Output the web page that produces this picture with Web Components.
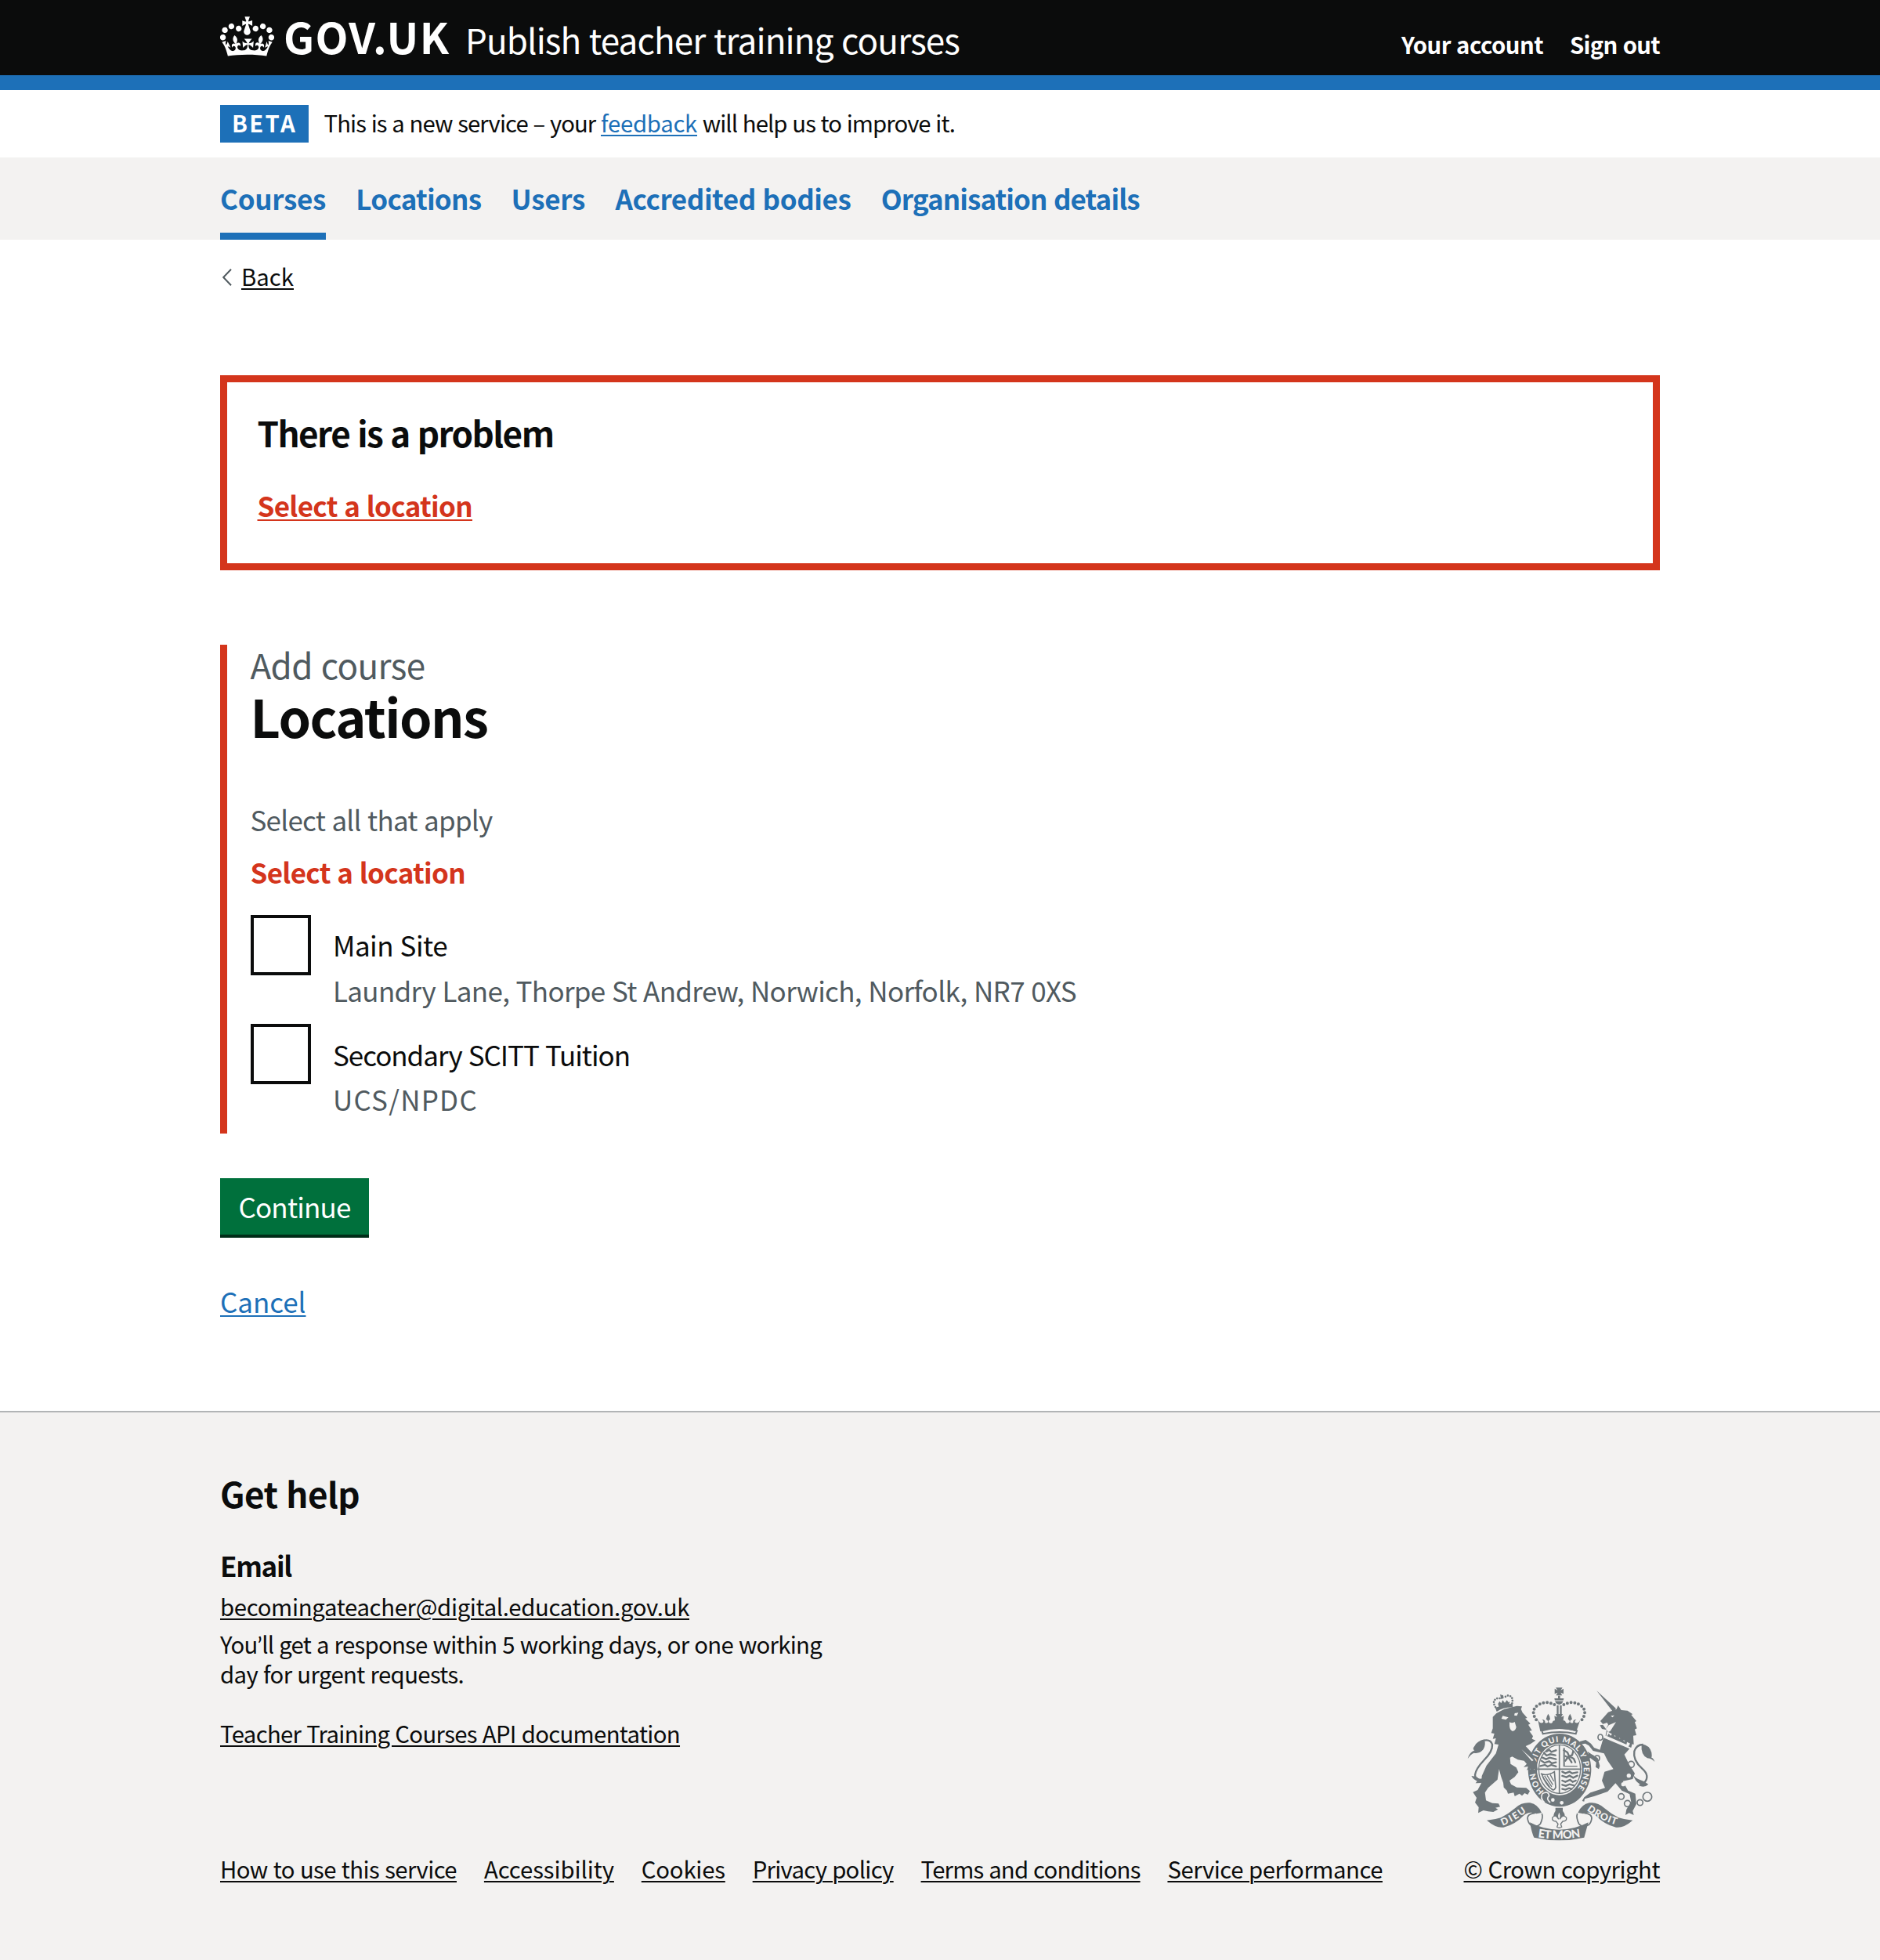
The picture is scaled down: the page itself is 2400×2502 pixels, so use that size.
<!DOCTYPE html>
<html lang="en">
<head>
<meta charset="utf-8">
<title>Locations – Publish teacher training courses</title>
<style>
html, body { margin: 0; }
body {
  font-family: "Noto Sans CJK SC", "Noto Sans", sans-serif;
  color: #0b0c0c;
  background: #fff;
  --blue: #1d70b8; --red: #d4351c; --grey: #505a5f; --pale: #f3f2f1;
}
service-page { min-height: 2502px; }
</style>
</head>
<body>
<service-page>
  <site-header slot="header"></site-header>
  <phase-banner slot="header"></phase-banner>
  <primary-nav slot="header"></primary-nav>
  <back-link></back-link>
  <error-summary>
    <fit-text slot="title" s="44" l="48" w="378" b>There is a problem</fit-text>
    <fit-text s="35" l="40" w="274.5" b u>Select a location</fit-text>
  </error-summary>
  <error-group>
    <fit-text slot="caption" s="44" l="48" w="223">Add course</fit-text>
    <fit-text slot="heading" s="66.5" l="70" w="303" b>Locations</fit-text>
    <fit-text slot="hint" s="35" l="40" w="309">Select all that apply</fit-text>
    <fit-text slot="error" s="35" l="40" w="274.5" b>Select a location</fit-text>
    <check-item>
      <fit-text s="35" l="40" w="146">Main Site</fit-text>
      <fit-text slot="hint" s="35" l="40" w="949">Laundry Lane, Thorpe St Andrew, Norwich, Norfolk, NR7 0XS</fit-text>
    </check-item>
    <check-item>
      <fit-text s="35" l="40" w="379">Secondary SCITT Tuition</fit-text>
      <fit-text slot="hint" s="35" l="40" w="185">UCS/NPDC</fit-text>
    </check-item>
  </error-group>
  <submit-button><fit-text s="35" l="40" w="143">Continue</fit-text></submit-button>
  <cancel-link></cancel-link>
  <site-footer slot="footer"></site-footer>
</service-page>

<script>
const define = (name, html) => {
  const t = document.createElement('template');
  t.innerHTML = html;
  customElements.define(name, class extends HTMLElement {
    connectedCallback() {
      if (this.shadowRoot) return;
      this.attachShadow({ mode: 'open' }).append(t.content.cloneNode(true));
    }
  });
};

/* One line of text tracked to an exact measure.
   s: font size, l: line height, w: measure, b: bold, u: underlined */
customElements.define('fit-text', class extends HTMLElement {
  connectedCallback() {
    if (this.shadowRoot) return;
    const a = n => this.getAttribute(n), s = +a('s'), w = +a('w');
    const drop = s > 30 && s < 60 ? 3 : 0;
    this.attachShadow({ mode: 'open' }).innerHTML = `<style>
      :host { display: block; flex: none; width: ${w}px; height: ${a('l')}px; line-height: ${+a('l') + drop}px;
        font-size: ${s}px; font-weight: ${this.hasAttribute('b') ? 700 : 400}; white-space: pre; word-spacing: .035em; }
      span { display: inline-block; height: 100%; }
      i { font-style: normal; ${this.hasAttribute('u') ? 'text-decoration: underline 2px; text-underline-offset: 3px;' : ''} }
    </style><span><i><slot></slot></i></span>`;
    const span = this.shadowRoot.querySelector('span');
    const natural = span.getBoundingClientRect().width;
    if (natural) this.style.letterSpacing = ((w - natural) / this.textContent.length).toFixed(3) + 'px';
  }
});

define('service-page', `<style>
  :host { display: flex; flex-direction: column; }
  main { width: 1838px; margin: 0 auto; height: 1495px; display: flex; flex-direction: column; align-items: flex-start; }
</style><slot name="header"></slot><main><slot></slot></main><slot name="footer"></slot>`);

define('crown-logo', `<style>:host { display: block; } svg { display: block; }</style>
<svg width="69" height="51" viewBox="0 4 35.6 26.2" fill="#fff"><path fill-rule="evenodd" d="M6.7 12.2c1 .4 2.1-.1 2.5-1s-.1-2.1-1-2.5c-1-.4-2.1.1-2.5 1-.4 1 0 2.1 1 2.5m-4.3 2.5c1 .4 2.1-.1 2.5-1s-.1-2.1-1-2.5c-1-.4-2.1.1-2.5 1-.5 1 0 2.1 1 2.5m-1.3 4.8c1 .4 2.1-.1 2.5-1 .4-1-.1-2.1-1-2.5-1-.4-2.1.1-2.5 1-.4 1 0 2.1 1 2.5m10.4-5.8c1 .4 2.1-.1 2.5-1s-.1-2.1-1-2.5c-1-.4-2.1.1-2.5 1s0 2.1 1 2.5m17.4-1.5c-1 .4-2.1-.1-2.5-1s.1-2.1 1-2.5c1-.4 2.1.1 2.5 1 .5 1 0 2.1-1 2.5m4.3 2.5c-1 .4-2.1-.1-2.5-1s.1-2.1 1-2.5c1-.4 2.1.1 2.5 1 .5 1 0 2.1-1 2.5m1.3 4.8c-1 .4-2.1-.1-2.5-1-.4-1 .1-2.1 1-2.5 1-.4 2.1.1 2.5 1 .4 1 0 2.1-1 2.5m-10.4-5.8c-1 .4-2.1-.1-2.5-1s.1-2.1 1-2.5c1-.4 2.1.1 2.5 1s0 2.1-1 2.5m-5.3-4.9 2.4 1.3V6.5l-2.4.8c-.1-.1-.1-.2-.2-.2s1-3 1-3h-3.4l1 3c-.1.1-.2.1-.2.2-.1.1-2.4-.7-2.4-.7v3.5L17 8.8c-.1.1 0 .2.1.3l-1.4 4.2c-.1.2-.1.4-.1.7 0 1.1.8 2.1 1.9 2.2h.6C19.2 16 20 15.1 20 14c0-.2 0-.4-.1-.7l-1.4-4.2c.2-.1.3-.2.3-.3m-1 20.3c4.6 0 8.9.3 12.8.9 1.1-4.6 2.4-7.2 3.8-9.1l-2.6-.9c.3 1.3.3 1.9 0 2.8-.4-.4-.8-1.2-1.1-2.4l-1.2 4.2c.8-.5 1.4-.9 2-.9-1.2 2.6-2.7 3.2-3.6 3-1.2-.2-1.7-1.3-1.5-2.2.3-1.3 1.6-1.6 2.2-.1 1.2-2.4-.8-3.1-2.1-2.4 1.9-1.9 2.2-3.6.6-5.7-2.2 1.7-2.2 3.3-1.2 5.6-1.3-1.5-3.3-.7-2.5 1.7.9-1.4 2.1-.5 2 .8-.2 1.2-1.7 2.1-3.7 1.9-2.8-.2-2.9-2.2-3-3.7.7-.1 1.9.5 3 2l.4-4.4c-1.1 1.1-2.1 1.4-3.2 1.4.4-1.2 2.1-3 2.1-3h-5.2s1.8 1.8 2.1 3c-1.1 0-2.1-.2-3.2-1.4l.4 4.4c1.1-1.5 2.3-2.1 3-2-.1 1.6-.2 3.5-3 3.7-1.9.2-3.5-.7-3.7-1.9-.2-1.3 1-2.2 1.9-.8.7-2.4-1.3-3.1-2.6-1.7 1-2.3.9-4-1.2-5.6-1.6 2.1-1.3 3.8.6 5.7-1.3-.7-3.2 0-2.1 2.4.6-1.5 1.9-1.1 2.2.1.2.9-.4 1.9-1.5 2.2-1 .2-2.4-.5-3.7-3 .7 0 1.3.4 2 .9L5 20.4c-.3 1.2-.7 1.9-1.2 2.4-.3-.8-.2-1.5 0-2.8l-2.6.9C2.7 22.8 4 25.4 5.1 30c3.8-.5 8.2-.9 12.7-.9"/></svg>`);

define('site-header', `<style>
  :host { display: block; height: 96px; background: #0b0c0c; border-bottom: 19px solid var(--blue); color: #fff; }
  .row { width: 1838px; margin: 0 auto; padding-top: 14px; display: flex; align-items: flex-start; }
  crown-logo { margin-top: 6.5px; }
  .word { margin-left: 12px; }
  .title { margin: 11px 0 0 19.5px; }
  nav { margin: 23px 0 0 auto; display: flex; gap: 34px; }
</style>
<div class="row"><crown-logo></crown-logo>
  <fit-text class="word" s="54.5" l="60" w="212.5" b>GOV.UK</fit-text>
  <fit-text class="title" s="44" l="48" w="631">Publish teacher training courses</fit-text>
  <nav><fit-text s="29.3" l="38" w="181" b>Your account</fit-text><fit-text s="29.3" l="38" w="115" b>Sign out</fit-text></nav>
</div>`);

define('phase-banner', `<style>
  :host { display: flex; width: 1838px; height: 67px; margin: 0 auto; padding-top: 19px; align-items: flex-start; }
  .tag { background: var(--blue); color: #fff; height: 48px; width: 98px; padding-left: 15px; margin-right: 19.5px; }
  .copy { display: flex; margin-top: 2.6px; } .link { color: var(--blue); }
</style>
<div class="tag"><fit-text s="29.3" l="44" w="83" b>BETA</fit-text></div>
<div class="copy"><fit-text s="29.3" l="38" w="353.5">This is a new service – your </fit-text><fit-text class="link" s="29.3" l="38" w="123" u>feedback</fit-text><fit-text s="29.3" l="38" w="329"> will help us to improve it.</fit-text></div>`);

define('primary-nav', `<style>
  :host { display: block; background: var(--pale); height: 105px; color: var(--blue); }
  nav { width: 1838px; height: 105px; margin: 0 auto; display: flex; gap: 38.3px; }
  div { box-sizing: border-box; height: 105px; padding-top: 30px; }
  .on { border-bottom: 9.5px solid var(--blue); }
</style><nav>
  <div class="on"><fit-text s="35" l="40" w="135" b>Courses</fit-text></div>
  <div><fit-text s="35" l="40" w="160" b>Locations</fit-text></div>
  <div><fit-text s="35" l="40" w="94.5" b>Users</fit-text></div>
  <div><fit-text s="35" l="40" w="301" b>Accredited bodies</fit-text></div>
  <div><fit-text s="35" l="40" w="330" b>Organisation details</fit-text></div>
</nav>`);

define('back-link', `<style>
  :host { display: flex; margin-top: 27px; height: 38px; }
  svg { width: 27px; height: 38px; }
</style><svg viewBox="0 0 27 38" fill="none" stroke="#505a5f" stroke-width="2"><path d="M14 10.8 4.2 21 14 31.2"/></svg>
<fit-text s="29.3" l="38" w="67" u>Back</fit-text>`);

define('error-summary', `<style>
  :host { display: block; box-sizing: border-box; width: 1838px; height: 249px; margin-top: 107.6px; border: 9.5px solid var(--red); padding: 39.5px 38.5px 0; }
  .link { margin-top: 47.5px; color: var(--red); }
</style><slot name="title"></slot><div class="link"><slot></slot></div>`);

define('error-group', `<style>
  :host { display: block; height: 623.6px; margin-top: 95.4px; border-left: 9.5px solid var(--red); padding-left: 29.5px; }
  .cap, .hint { color: var(--grey); } .head { margin: 7.4px 0 76px; }
  .err { color: var(--red); margin: 27px 0 36.4px; }
</style><div class="cap"><slot name="caption"></slot></div><div class="head"><slot name="heading"></slot></div>
<div class="hint"><slot name="hint"></slot></div><div class="err"><slot name="error"></slot></div><slot></slot>`);

define('check-item', `<style>
  :host { display: flex; gap: 28.5px; height: 139.5px; }
  .box { box-sizing: border-box; width: 77px; height: 77px; border: 4px solid #0b0c0c; }
  .label { padding-top: 16.4px; } .hint { margin-top: 17.5px; color: var(--grey); }
</style><div class="box"></div><div class="label"><slot></slot><div class="hint"><slot name="hint"></slot></div></div>`);

define('submit-button', `<style>
  :host { display: block; box-sizing: border-box; width: 190px; height: 76px; margin-top: 57.8px; padding: 14px 0 0 23.5px; background: #00703c; color: #fff; border-bottom: 4px solid #002d18; }
</style><slot></slot>`);

define('cancel-link', `<style>:host { display: block; margin-top: 59px; color: var(--blue); }</style>
<fit-text s="35" l="40" w="109.5" u>Cancel</fit-text>`);

define('royal-arms', `<style>:host { display: block; } svg { display: block; }
  text { font: 900 37px Lato, sans-serif; fill: #f3f2f1; } .garter { font-size: 31px; }
</style>
<svg width="240.7" height="198.3" viewBox="70 65 722 595" fill="#6f777b" stroke="none">
  <!-- imperial crown -->
  <path d="M409 72h26l-7 10 11-6v20l-11-5 6 11h-24l6-11-11 5V76l11 6zM418 103h8v10h14q-2 22-18 24-16-2-18-24h14z"/>
  <path d="M403 122h38" stroke="#f3f2f1" stroke-width="3"/>
  <path d="M404 137q-30-16-60 0-36 22-8 60M440 137q30-16 60 0 36 22 8 60" fill="none" stroke="#6f777b" stroke-width="12" stroke-linecap="round" stroke-dasharray="0 14.5"/>
  <path d="M413 140h7v36h-7zM425 140h7v36h-7z"/>
  <path d="M340 192q6 20 20 14 5-6-4-12 14 0 12 12 8 4 12-2-2-10-8-10 2-12 8-22 8 10 8 22-8 2-6 10 6 8 14 2 2-10 10-8l-2-18 10 5-6-12h28l-6 12 10-5-2 18q8-2 10 8 8 6 14-2 2-8-6-10 0-12 8-22 6 10 8 22-8 0-8 10 4 6 12 2-2-12 12-12-9 6-4 12 14 6 20-14l-16 48q-70-22-138 0z"/>
  <path d="M356 237q66-20 134 0l-4 12q-60-14-126 0z" fill="none" stroke="#6f777b" stroke-width="6"/>
  <!-- garter and shield -->
  <path fill-rule="evenodd" d="M424 248c66 0 121 60 121 136s-50 144-121 144-121-66-121-144 55-136 121-136zm0 38c-48 0-87 43-87 98s38 100 87 100 86-45 86-100-38-98-86-98z"/>
  <ellipse cx="424" cy="384" rx="80" ry="93" fill="none" stroke="#6f777b" stroke-width="4"/>
  <path d="M341 384h166M423 290v188" stroke="#6f777b" stroke-width="5"/>
  <g fill="none" stroke="#6f777b" stroke-width="7" stroke-linecap="round">
    <path d="M374 316l10-6 8 8 18-6M364 322l10 10 14-5 20 4M358 340l14 6 14-6 24 6M354 352l12 8 18-6 10 8 16-4M350 372l18-4 10 6 14-6 18 6"/>
    <path d="M434 394l12 6 16-6 10 6 20-4M434 410l16 5 12-6 14 8 16-8M434 428l12 5 18-8 10 8 12-5M434 444l14 4 14-6 18 5M434 460l12 3 14-6 10 3"/>
    <path d="M440 312l14 8 6 14 18 10 6 14M446 352l10-14 16-8 4-14M446 334l14 8 10 16"/>
  </g>
  <path d="M438 303h6v68h-6zM438 371h54v4h-54z"/>
  <path d="M352 402q24 10 52-8l5 60q-6 16-16 6-20-12-38-58z" fill="none" stroke="#6f777b" stroke-width="5"/>
  <path d="M366 410l28 42M376 408l22 36M388 405l14 26M360 416l26 36" stroke="#6f777b" stroke-width="4"/>
  <path id="g" d="M366 470A93 106 0 1 1 493 456" fill="none"/>
  <text class="garter"><textPath href="#g" startOffset="2" textLength="480" lengthAdjust="spacing">HON SOIT QUI MAL Y PENSE</textPath></text>
  <path d="M358 478q-10 18 8 34M358 478q22-12 26 8-14 12 4 26" fill="none" stroke="#f3f2f1" stroke-width="5"/>
  <circle cx="398" cy="502" r="7" fill="#f3f2f1"/><circle cx="432" cy="513" r="7" fill="#f3f2f1"/>
  <!-- lion -->
  <path d="M177 148l66-16 2 16q-34-2-62 16z"/>
  <path d="M178 146q-16-26 10-34l12 2M242 132q6-28-16-30l-16 8" fill="none" stroke="#6f777b" stroke-width="8" stroke-linecap="round" stroke-dasharray="0 10"/>
  <path d="M196 98l12 4 2 10-10 4zM188 134l6-10 6 8 6-12 8 10 8-10 6 8 6-2-4 12-38 10z"/>
  <path d="M168 184l14-14 30-16 48-12 20 2-4 10 6 14 18 20-8 2 20 20-8 4 14 22-10 2 14 20-4 10 14 6-20 14-18 8 20 22 22 40 4 30-14-4-12 10-2-12-14 6 6-14-18 2 12-12-10-12-24-4-22-12-8 4 2 24 22 14 8 18-14 18-20 14 6 14 22 12 36 2 14 12-8 14-12-6-10 10-10-8-18 10-4-14-22 4-4-12-12-12-2-18-8-22-8-30-6 40-36 32-12 18 4 30 24 10 24 2 6 12-18 4 10 6-18 10-20-2-18-4-20 10 2-22-14-18 6-18-14-22 18-8 14-26 2-28 18-40 36-46 10-34-16-2 6-22-12 2 6-20-12-2 6-18z"/>
  <path d="M206 180l22 6-10 9-17-4zM252 170l14-2-6 12-10-2zM232 204q10 6 20-1l6 20q-4 16-16 15-12-4-10-34zM278 308l46 42-6 4z" fill="#f3f2f1"/>
  <path d="M148 426q-48 4-48-20 2-22 34-56 34-34 32-60-6-20-30-16" fill="none" stroke="#6f777b" stroke-width="7"/>
  <path d="M72 344q6-24 26-32-10-4 0-16 10-20 38-26 6 22-4 38-14 18-36 14-12 4-24 22zM86 410q22 2 30 12 20-4 36-2-16 20-50 18l6-8q-16-8-22-20z"/>
  <!-- unicorn -->
  <path d="M566 84l74 68-12 12zM580 200l30-34 32-12 6-14 12 18 24 2 20 14-6 2 20 24-6 4 8 24-8 4 6 22-12 2 2 34-6-2-4 14-98-46 4-22-18-4-8-14 14-2zM592 264l100 42-20 22 18 38 22 34-8 22-38 8 20 36 28 12 4 40-14 26 4 16-18-8-14 8 4-22 18-28-6-30-30-14-24-28-30 32-52 18-36 10-2 10-8-2 8-14 24-18 56-18-12-28 10-34 34-10-22-32-14-28-42-10-16-20-14-8-22 4 2-12 22-6 20 14 12 16 22 8zM534 326l-4-10 40 26 8 30-4 12-12-8 2-18-22-16-22 6-2-8z"/>
  <path d="M606 240l88 46-8 14-84-40zM620 180l14-2-8 8zM588 212l18-6 4 8-10 18 12-16 28-12-22 34-8 4z" fill="#f3f2f1"/>
  <path d="M606 258l6-10 8 8 8-12 8 16 10-10 8 18 10-8 6 18 14-6-4 18z"/>
  <path d="M748 436q24-26-8-54-36-32-30-66 8-26 34-26" fill="none" stroke="#6f777b" stroke-width="7"/>
  <path d="M738 288q30 4 38 32 2 12 0 20 8 2 12 16-10-12-28-14-26-12-22-54zM706 406q10 14 24 18 20 6 34 18-16 16-38 4l6-4q-20-12-26-36z"/>
  <g fill="none" stroke="#6f777b" stroke-width="5"><ellipse cx="580" cy="262" rx="9" ry="11"/><ellipse cx="568" cy="342" rx="9" ry="10"/><circle cx="698" cy="366" r="12"/><circle cx="660" cy="489" r="11"/><circle cx="684" cy="516" r="12"/><circle cx="732" cy="512" r="11"/><circle cx="760" cy="490" r="17"/></g>
  <circle cx="689" cy="409" r="8" fill="#f3f2f1"/><circle cx="668" cy="442" r="8" fill="#f3f2f1"/>
  <!-- motto ribbon -->
  <path d="M145 580q30-2 54-10 30-16 56-38 24-22 56-19 30 6 44 38l-20 4q-26-12-50 8-32 34-76 44-28 4-64-27zM704 580q-30-2-54-10-30-16-56-38-24-22-56-19-30 6-44 38l20 4q26-12 50 8 32 34 76 44 28 4 64-27z"/>
  <path d="M310 588q52 28 112 28t112-28l-16 58q-96 22-192 0-8-14-16-58z"/>
  <path d="M330 552q-34 4-28 26 4 18 16 22 20 8 32-6 12-26 6-40M518 552q34 4 28 26-4 18-16 22-20 8-32-6-12-26-6-40" fill="none" stroke="#6f777b" stroke-width="5"/>
  <path d="M408 532h28v12q14 18 4 32h-36q-8-16 4-32z"/>
  <path d="M422 546q10 16 2 30 14-22 26-6 2 14-14 14l-8 10 4 12q-10 6-18 0l4-12-8-10q-16 0-14-14 12-16 24 6-8-14 2-30z" fill="#f3f2f1" stroke="#6f777b" stroke-width="4"/>
  <path id="l" d="M206 601Q258 580 306 541" fill="none"/><path id="m" d="M341 645Q422 658 510 643" fill="none"/><path id="r" d="M528 541Q580 582 656 602" fill="none"/>
  <text><textPath href="#l" textLength="106">DIEU</textPath></text><text style="font-size:44px"><textPath href="#m" textLength="164">ET MON</textPath></text><text><textPath href="#r" textLength="126">DROIT</textPath></text>
</svg>`);

define('site-footer', `<style>
  :host { display: flex; flex: 1; background: var(--pale); border-top: 2px solid #b1b4b6; }
  .wrap { width: 1838px; margin: 0 auto; display: flex; justify-content: space-between; align-items: flex-start; }
  .left { padding-top: 77.5px; } .right { padding-top: 348.7px; }
  .h3 { margin-top: 47.5px; } .mail { margin-top: 15px; } .para { margin-top: 9.5px; } .api { margin-top: 38.6px; }
  nav { display: flex; gap: 34.9px; margin-top: 135px; }
  royal-arms { margin-left: 4.7px; } .copy { margin-top: 16.4px; }
  .q { font-family: Lato, sans-serif; line-height: 0; }
</style><div class="wrap"><div class="left">
  <fit-text s="44" l="48" w="178" b>Get help</fit-text>
  <fit-text class="h3" s="35" l="40" w="91" b>Email</fit-text>
  <fit-text class="mail" s="29.3" l="38" w="599" u>becomingateacher@digital.education.gov.uk</fit-text>
  <fit-text class="para" s="29.3" l="38.4" w="768">You<span class="q">’</span>ll get a response within 5 working days, or one working</fit-text>
  <fit-text s="29.3" l="38" w="311">day for urgent requests.</fit-text>
  <fit-text class="api" s="29.3" l="38" w="587" u>Teacher Training Courses API documentation</fit-text>
  <nav>
    <fit-text s="29.3" l="38" w="302" u>How to use this service</fit-text>
    <fit-text s="29.3" l="38" w="166" u>Accessibility</fit-text>
    <fit-text s="29.3" l="38" w="107" u>Cookies</fit-text>
    <fit-text s="29.3" l="38" w="180" u>Privacy policy</fit-text>
    <fit-text s="29.3" l="38" w="280" u>Terms and conditions</fit-text>
    <fit-text s="29.3" l="38" w="274.5" u>Service performance</fit-text>
  </nav></div>
  <div class="right"><royal-arms></royal-arms><fit-text class="copy" s="29.3" l="38" w="250.5" u>© Crown copyright</fit-text></div>
</div>`);
</script>
</body>
</html>
